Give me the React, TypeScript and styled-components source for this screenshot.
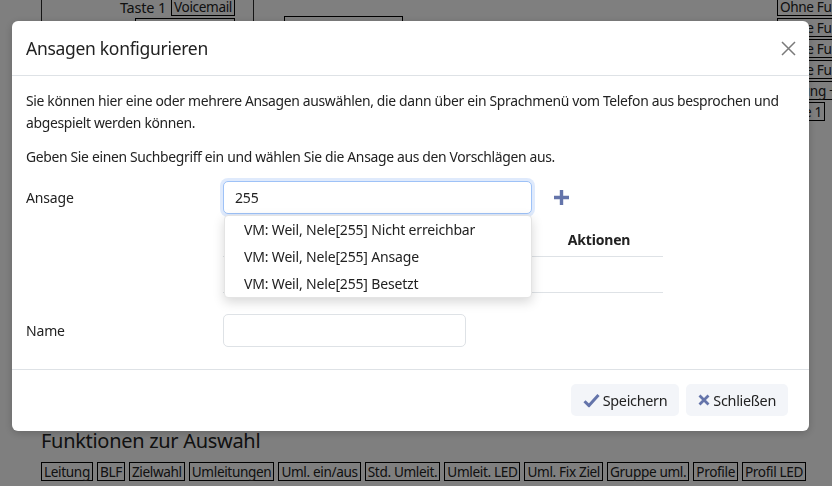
import styled, { createGlobalStyle } from 'styled-components';

const GlobalStyle = createGlobalStyle`
  html,
  body {
    margin: 0;
    padding: 0;
  }

  body {
    width: 832px;
    height: 486px;
    overflow: hidden;
    background: #fff;
    color: #222;
    font-family: 'Noto Sans', 'DejaVu Sans', sans-serif;
  }
`;

const keyTags = ['Ohne Funktion', 'Ohne Funktion', 'Ohne Funktion', 'Ohne Funktion', 'Leitung + BLF', 'Taste 1'];

const functionTags = [
  'Leitung',
  'BLF',
  'Zielwahl',
  'Umleitungen',
  'Uml. ein/aus',
  'Std. Umleit.',
  'Umleit. LED',
  'Uml. Fix Ziel',
  'Gruppe uml.',
  'Profile',
  'Profil LED',
];

const suggestions = [
  'VM: Weil, Nele[255] Nicht erreichbar',
  'VM: Weil, Nele[255] Ansage',
  'VM: Weil, Nele[255] Besetzt',
];

const CheckIcon = () => (
  <svg width="17" height="15" viewBox="0 0 17 15">
    <path d="M1.5 8.2 L6 12.6 L15.5 2" fill="none" stroke="#6474aa" strokeWidth="3" strokeLinejoin="round" />
  </svg>
);

const CrossIcon = () => (
  <svg width="12" height="12" viewBox="0 0 12 12">
    <path d="M1.5 1.5 L10.5 10.5 M10.5 1.5 L1.5 10.5" stroke="#6474aa" strokeWidth="2.8" />
  </svg>
);

const App = () => {
  return (
    <>
      <GlobalStyle />
      <Page>
        <KeyTable>
          <KeyCell />
          <KeyCell $ruled>
            <KeyLine>
              Taste 1 <Tag>Voicemail</Tag>
            </KeyLine>
            <KeyLine>
              <Tag $wide>&nbsp;</Tag>
            </KeyLine>
          </KeyCell>
          <KeyCell $ruled>
            <EmptyBox />
          </KeyCell>
          <KeyCell>
            <KeyStack>
              {keyTags.map((tag, index) => (
                <Tag key={index}>{tag}</Tag>
              ))}
            </KeyStack>
          </KeyCell>
        </KeyTable>
        <SectionTitle>Funktionen zur Auswahl</SectionTitle>
        <TagRow>
          {functionTags.map((tag) => (
            <Tag key={tag}>{tag}</Tag>
          ))}
        </TagRow>
      </Page>

      <Backdrop>
        <Modal>
          <ModalHeader>
            <ModalTitle>Ansagen konfigurieren</ModalTitle>
            <CloseButton aria-label="close">
              <svg width="15" height="15" viewBox="0 0 15 15">
                <path d="M1 1 L14 14 M14 1 L1 14" stroke="#7a7a7a" strokeWidth="1.5" />
              </svg>
            </CloseButton>
          </ModalHeader>

          <ModalBody>
            <Text>
              Sie können hier eine oder mehrere Ansagen auswählen, die dann über ein Sprachmenü vom Telefon aus
              besprochen und abgespielt werden können.
            </Text>
            <Text>Geben Sie einen Suchbegriff ein und wählen Sie die Ansage aus den Vorschlägen aus.</Text>

            <FormGrid>
              <Label>Ansage</Label>
              <SearchRow>
                <SearchField>
                  <Input $focused defaultValue="255" $width={309} />
                  <Suggestions>
                    {suggestions.map((item) => (
                      <Suggestion key={item}>{item}</Suggestion>
                    ))}
                  </Suggestions>
                </SearchField>
                <AddButton aria-label="add">
                  <svg width="17" height="17" viewBox="0 0 17 17">
                    <path d="M8.5 1 V16 M1 8.5 H16" stroke="#6474aa" strokeWidth="3.4" />
                  </svg>
                </AddButton>
              </SearchRow>

              <span />
              <Table>
                <thead>
                  <tr>
                    <Th>Ansage</Th>
                    <Th $center>Aktionen</Th>
                  </tr>
                </thead>
                <tbody>
                  <tr>
                    <Td />
                    <Td />
                  </tr>
                </tbody>
              </Table>

              <Label>Name</Label>
              <Input $width={243} />
            </FormGrid>
          </ModalBody>

          <ModalFooter>
            <FooterButton>
              <CheckIcon />
              Speichern
            </FooterButton>
            <FooterButton>
              <CrossIcon />
              Schließen
            </FooterButton>
          </ModalFooter>
        </Modal>
      </Backdrop>
    </>
  );
};

const Page = styled.div`
  height: 489px;
  margin-top: -3px;
  overflow: hidden;
`;

const KeyTable = styled.div`
  display: grid;
  grid-template-columns: 41px 212px 524px 1fr;
  height: 431px;
`;

const KeyCell = styled.div<{ $ruled?: boolean }>`
  border-left: ${({ $ruled }) => ($ruled ? '1px solid #2a2a2a' : 'none')};
  min-width: 0;
`;

const KeyLine = styled.div`
  display: flex;
  justify-content: flex-end;
  align-items: center;
  gap: 5px;
  padding-right: 18px;
  margin-bottom: 2px;
  font-size: 14.5px;
  letter-spacing: -0.2px;
  line-height: 18px;
`;

const EmptyBox = styled.div`
  width: 117px;
  height: 60px;
  margin: 19px 0 0 30px;
  border: 1px solid #000;
`;

const KeyStack = styled.div`
  display: flex;
  flex-direction: column;
  align-items: flex-start;
  gap: 2px;
`;

const Tag = styled.span<{ $wide?: boolean }>`
  display: inline-block;
  border: 1px solid #000;
  padding: 0 2px;
  min-width: ${({ $wide }) => ($wide ? '94px' : '0')};
  font-size: 13.6px;
  letter-spacing: -0.35px;
  line-height: 17px;
  white-space: nowrap;
  color: #222;
`;

const SectionTitle = styled.h2`
  margin: 0 0 8px 41px;
  font-size: 20px;
  font-weight: 400;
  letter-spacing: -0.3px;
  line-height: 26px;
`;

const TagRow = styled.div`
  display: flex;
  gap: 4px;
  padding-left: 41px;
`;

const Backdrop = styled.div`
  position: fixed;
  inset: 0;
  background: rgba(0, 0, 0, 0.5);
`;

const Modal = styled.div`
  width: 797px;
  margin: 21px 0 0 12px;
  background: #fff;
  border-radius: 6px;
  box-shadow: 0 2px 8px rgba(0, 0, 0, 0.2);
  color: #222;
  letter-spacing: -0.17px;
`;

const ModalHeader = styled.div`
  display: flex;
  align-items: center;
  justify-content: space-between;
  height: 54px;
  padding: 0 13px 0 14px;
  border-bottom: 1px solid #dee2e6;
`;

const ModalTitle = styled.h5`
  margin: 0;
  font-size: 17.5px;
  font-weight: 400;
  letter-spacing: -0.3px;
`;

const CloseButton = styled.button`
  display: flex;
  padding: 0;
  border: none;
  background: none;
`;

const ModalBody = styled.div`
  padding: 14px 14px 22px;
`;

const Text = styled.p`
  margin: 0 0 12px;
  font-size: 13.9px;
  letter-spacing: -0.33px;
  line-height: 22px;

  & + & {
    margin-bottom: 13px;
  }
`;

const FormGrid = styled.div`
  display: grid;
  grid-template-columns: 197px 1fr;
  align-items: center;
  row-gap: 9px;

  & > :nth-child(5),
  & > :nth-child(6) {
    margin-top: 12px;
  }
`;

const Label = styled.label`
  font-size: 14px;
`;

const SearchRow = styled.div`
  display: flex;
  align-items: center;
  gap: 21px;
`;

const SearchField = styled.div`
  position: relative;
`;

const Input = styled.input<{ $focused?: boolean; $width: number }>`
  box-sizing: border-box;
  width: ${({ $width }) => $width}px;
  height: 33px;
  padding: 0 11px;
  border: 1px solid ${({ $focused }) => ($focused ? '#9ec2f7' : '#dee2e6')};
  border-radius: 5px;
  box-shadow: ${({ $focused }) => ($focused ? '0 0 0 3px rgba(110, 160, 240, 0.22)' : 'none')};
  font-family: inherit;
  font-size: 14px;
  letter-spacing: inherit;
  color: #222;
  outline: none;
`;

const Suggestions = styled.ul`
  position: absolute;
  top: 34px;
  left: 1px;
  width: 306px;
  margin: 0;
  padding: 0;
  list-style: none;
  background: #fff;
  border: 1px solid #e4e4e4;
  border-radius: 4px;
  box-shadow: 0 4px 12px rgba(0, 0, 0, 0.16);
  z-index: 2;
`;

const Suggestion = styled.li`
  height: 27px;
  padding-left: 19px;
  font-size: 14px;
  line-height: 27px;
  white-space: nowrap;
`;

const AddButton = styled.button`
  display: flex;
  padding: 0;
  border: none;
  background: none;
`;

const Table = styled.table`
  width: 440px;
  border-collapse: collapse;
  font-size: 14px;
`;

const Th = styled.th<{ $center?: boolean }>`
  height: 33px;
  padding: 0 8px;
  border-bottom: 1px solid #dee2e6;
  text-align: ${({ $center }) => ($center ? 'center' : 'left')};
  font-weight: 700;
  width: ${({ $center }) => ($center ? '112px' : 'auto')};
`;

const Td = styled.td`
  height: 33px;
  border-bottom: 1px solid #dee2e6;
`;

const ModalFooter = styled.div`
  display: flex;
  justify-content: flex-end;
  gap: 7px;
  padding: 14px 21px 15px;
  border-top: 1px solid #dee2e6;
`;

const FooterButton = styled.button`
  display: flex;
  align-items: center;
  gap: 3px;
  height: 32px;
  padding: 0 12px;
  border: none;
  border-radius: 5px;
  background: #f3f5f9;
  font-family: inherit;
  font-size: 14.4px;
  letter-spacing: -0.3px;
  color: #222;
`;

export default App;
